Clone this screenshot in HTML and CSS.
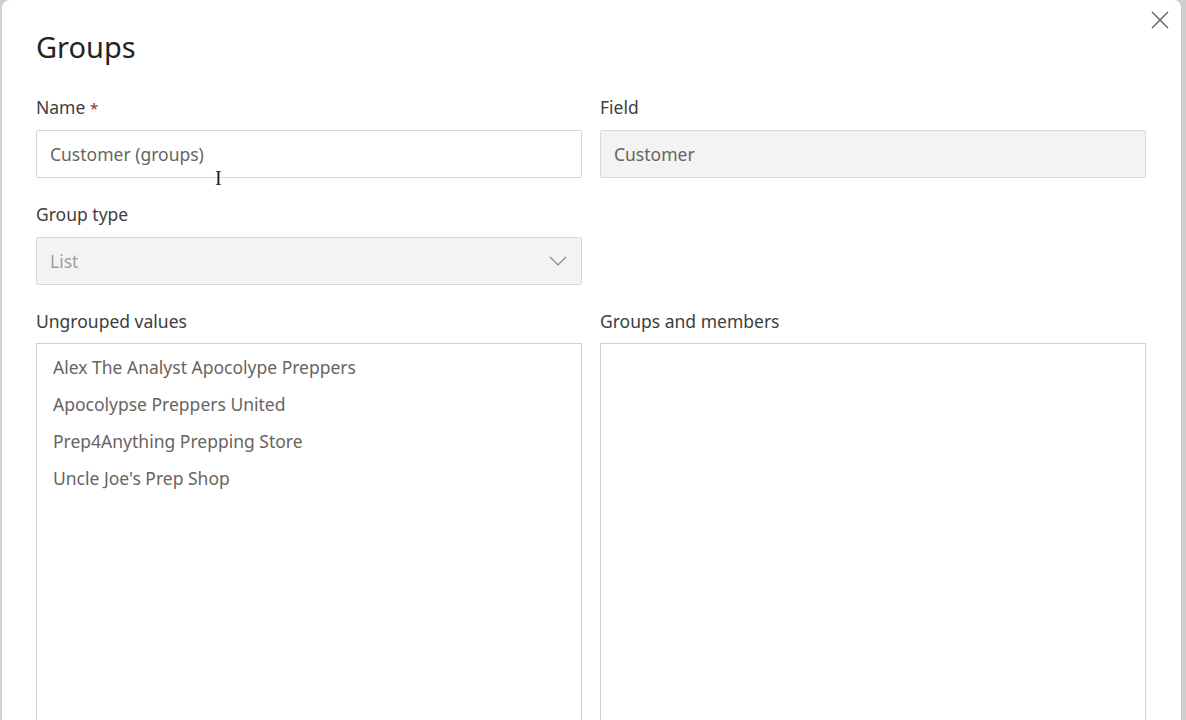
FILE: index.html
```html
<!DOCTYPE html>
<html>
<head>
<meta charset="utf-8">
<link rel="stylesheet" href="styles.css">
</head>
<body>
<div class="dialog">
  <button class="close" aria-label="Close">
    <svg width="20" height="20" viewBox="0 0 20 20"><path d="M2 2 L18 18 M18 2 L2 18" stroke="#605e5c" stroke-width="1.4" fill="none"/></svg>
  </button>
  <h1 class="title">Groups</h1>
  <div class="grid">
    <div class="field">
      <label class="label">Name <span class="req">*</span></label>
      <div class="input">Customer (groups)<span class="cursor">I</span></div>
    </div>
    <div class="field">
      <label class="label">Field</label>
      <div class="input disabled">Customer</div>
    </div>
    <div class="field">
      <label class="label">Group type</label>
      <div class="input disabled select"><span class="muted">List</span>
        <svg class="chev" width="18" height="10" viewBox="0 0 18 10"><path d="M1 1 L9 9 L17 1" stroke="#8a8886" stroke-width="1.2" fill="none"/></svg>
      </div>
    </div>
    <div></div>
    <div class="field">
      <label class="label">Ungrouped values</label>
      <div class="list">
        <div class="item">Alex The Analyst Apocolype Preppers</div>
        <div class="item">Apocolypse Preppers United</div>
        <div class="item">Prep4Anything Prepping Store</div>
        <div class="item">Uncle Joe's Prep Shop</div>
      </div>
    </div>
    <div class="field">
      <label class="label">Groups and members</label>
      <div class="list"></div>
    </div>
  </div>
</div>
</body>
</html>
```
FILE: styles.css
```css
html, body {
  margin: 0;
  padding: 0;
  height: 720px;
  overflow: hidden;
  background: #cfcfcf;
  font-family: "Noto Sans", "Open Sans", sans-serif;
}
.dialog {
  position: relative;
  margin-left: 2px;
  width: 1180px;
  height: 720px;
  overflow: hidden;
  background: #ffffff;
  border-radius: 8px 8px 0 0;
  border-right: 1px solid #c8c8c8;
  box-sizing: border-box;
  padding: 25px 37px 0 34px;
}
.close {
  position: absolute;
  top: 10px;
  right: 11px;
  border: 0;
  background: none;
  padding: 0;
  width: 20px;
  height: 20px;
}
.title {
  margin: 0;
  font-size: 29px;
  font-weight: 400;
  color: #252423;
  line-height: 44px;
}
.grid {
  margin-top: 26px;
  display: grid;
  grid-template-columns: 546px 546px;
  column-gap: 18px;
  row-gap: 24px;
}
.field {
  display: flex;
  flex-direction: column;
}
.label {
  font-size: 17.5px;
  color: #403e3c;
  line-height: 24px;
  height: 24px;
  margin-bottom: 11px;
}
.req { color: #a4262c; font-size: 15px; line-height: 0; }
.input {
  position: relative;
  height: 48px;
  box-sizing: border-box;
  border: 1px solid #d6d6d6;
  border-radius: 2px;
  padding: 0 13px;
  display: flex;
  align-items: center;
  font-size: 17.5px;
  color: #67655f;
}
.input.disabled {
  background: #f3f3f3;
  border-color: #d8d8d8;
}
.muted { color: #a19f9d; }
.select { justify-content: space-between; }
.chev { margin-right: 1px; }
.cursor {
  position: absolute;
  left: 178px;
  top: 37px;
  font-family: "Liberation Serif", serif;
  font-size: 20px;
  color: #222;
  line-height: 20px;
}
.list {
  height: 380px;
  margin-top: -1px;
  border: 1px solid #d0d0d0;
  border-bottom: 0;
  padding-top: 5px;
  box-sizing: border-box;
}
.item {
  font-size: 17.5px;
  color: #67655f;
  padding: 0 16px;
  line-height: 37px;
}
```
